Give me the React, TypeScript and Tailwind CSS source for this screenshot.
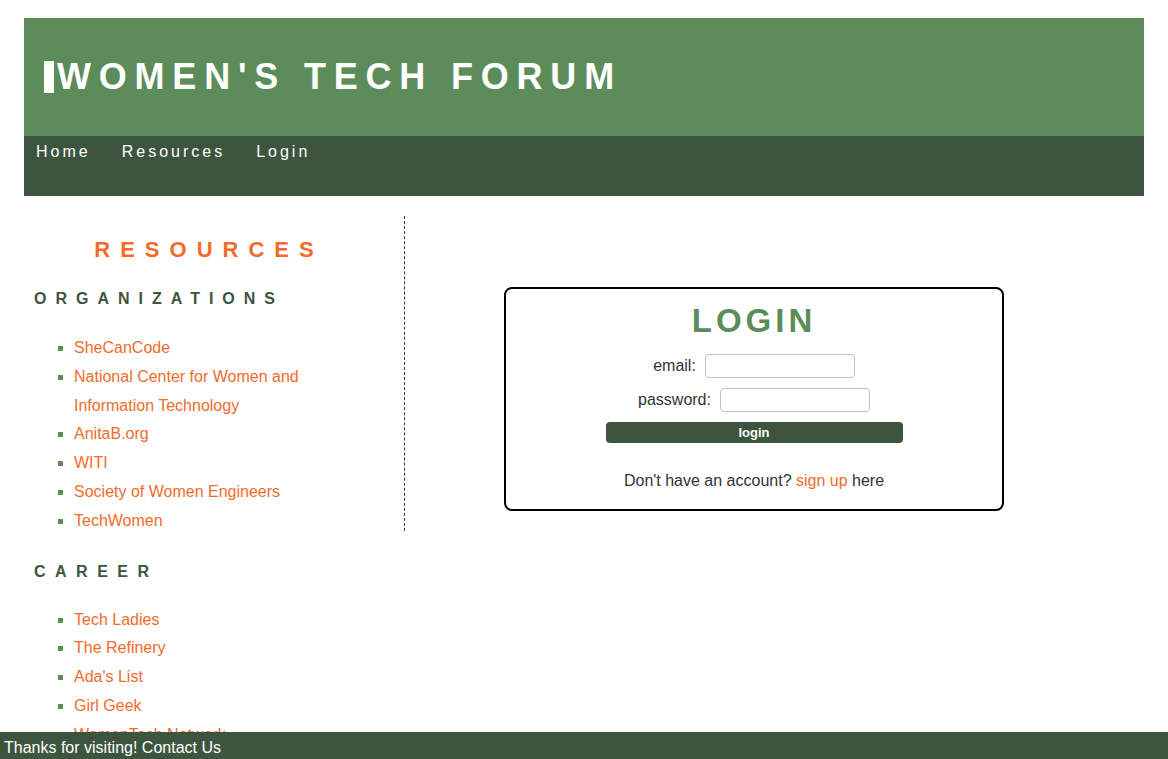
const organizations = [
  "SheCanCode",
  "National Center for Women and Information Technology",
  "AnitaB.org",
  "WITI",
  "Society of Women Engineers",
  "TechWomen",
];

const careers = ["Tech Ladies", "The Refinery", "Ada's List", "Girl Geek", "WomenTech Network", "Women Who Code"];

function LinkList({ items }: { items: string[] }) {
  return (
    <ul className="list-[square] pl-[40px] pr-[20px] text-[16px] leading-[1.8] marker:text-[#5b8c5a]">
      {items.map((item) => (
        <li key={item}>
          <a className="text-[#f26b2b]" href="#">
            {item}
          </a>
        </li>
      ))}
    </ul>
  );
}

function Sidebar() {
  return (
    <aside className="h-[315px] w-[381px] shrink-0 border-r border-dashed border-[#333] pl-[10px] pr-[20px]">
      <h2 className="mt-[21px] text-center text-[22px] font-bold leading-[normal] tracking-[10px] text-[#f26b2b]">
        RESOURCES
      </h2>
      <h3 className="mt-[27px] mb-[26px] text-[16px] font-bold leading-[normal] tracking-[9px] text-[#3d553e]">
        ORGANIZATIONS
      </h3>
      <LinkList items={organizations} />
      <h3 className="mt-[27px] mb-[25px] text-[16px] font-bold leading-[normal] tracking-[9.5px] text-[#3d553e]">
        CAREER
      </h3>
      <LinkList items={careers} />
    </aside>
  );
}

function LoginCard() {
  return (
    <div className="mt-[71px] ml-[99px] w-[500px] rounded-[8px] border-2 border-black pt-[13px] pb-[19px] text-center text-[16px] leading-[normal] text-[#333]">
      <h2 className="text-[33px] font-bold leading-[normal] tracking-[4px] text-[#5b8c5a]">LOGIN</h2>
      <div className="mt-[14px] flex flex-col items-center gap-[10px]">
        <label className="flex items-center gap-[9px]">
          email:
          <input className="h-[24px] w-[150px] rounded-[4px] border border-[#c3c3c3] bg-white" type="email" />
        </label>
        <label className="flex items-center gap-[9px]">
          password:
          <input className="h-[24px] w-[150px] rounded-[4px] border border-[#c3c3c3] bg-white" type="password" />
        </label>
        <button className="h-[21px] w-[297px] rounded-[4px] bg-[#3d553e] text-[13px] font-bold text-white" type="button">
          login
        </button>
      </div>
      <p className="mt-[29px]">
        Don't have an account?{" "}
        <a className="text-[#f26b2b]" href="#">
          sign up
        </a>{" "}
        here
      </p>
    </div>
  );
}

export default function App() {
  return (
    <div className="min-h-screen bg-white font-['Liberation_Sans',Arial,sans-serif]">
      <div className="mx-[24px] pt-[18px]">
        <header className="flex h-[118px] items-center bg-[#5b8c5a] pl-[20px]">
          <h1 className="flex items-center text-[36px] font-bold leading-[normal] tracking-[7.8px] text-white">
            <span className="mr-[3px] inline-block h-[32px] w-[10px] bg-white" />
            WOMEN'S TECH FORUM
          </h1>
        </header>
        <nav className="flex h-[60px] gap-[31px] bg-[#3d553e] pt-[7px] pl-[12px] text-[16px] leading-[normal] tracking-[3px] text-white">
          <a href="#">Home</a>
          <a href="#">Resources</a>
          <a href="#">Login</a>
        </nav>
        <div className="mt-[20px] flex">
          <Sidebar />
          <main className="flex-1">
            <LoginCard />
          </main>
        </div>
      </div>
      <footer className="fixed inset-x-0 bottom-0 h-[27px] bg-[#3d553e] pt-[7px] pl-[4px] text-[16px] leading-[normal] text-white">
        Thanks for visiting! Contact Us
      </footer>
    </div>
  );
}
